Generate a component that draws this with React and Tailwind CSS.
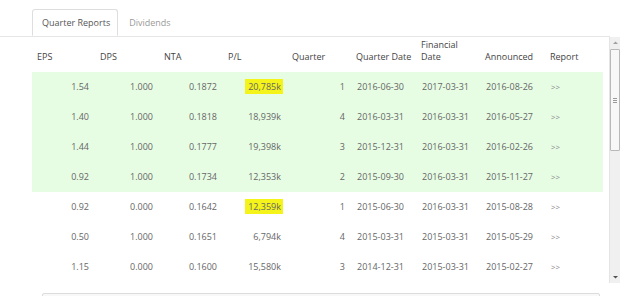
import React from 'react';

const rows = [
  { eps: '1.54', dps: '1.000', nta: '0.1872', pl: '20,785k', q: '1', qd: '2016-06-30', fd: '2017-03-31', ann: '2016-08-26', green: true, mark: true },
  { eps: '1.40', dps: '1.000', nta: '0.1818', pl: '18,939k', q: '4', qd: '2016-03-31', fd: '2016-03-31', ann: '2016-05-27', green: true },
  { eps: '1.44', dps: '1.000', nta: '0.1777', pl: '19,398k', q: '3', qd: '2015-12-31', fd: '2016-03-31', ann: '2016-02-26', green: true },
  { eps: '0.92', dps: '1.000', nta: '0.1734', pl: '12,353k', q: '2', qd: '2015-09-30', fd: '2016-03-31', ann: '2015-11-27', green: true },
  { eps: '0.92', dps: '0.000', nta: '0.1642', pl: '12,359k', q: '1', qd: '2015-06-30', fd: '2016-03-31', ann: '2015-08-28', mark: true },
  { eps: '0.50', dps: '1.000', nta: '0.1651', pl: '6,794k', q: '4', qd: '2015-03-31', fd: '2015-03-31', ann: '2015-05-29' },
  { eps: '1.15', dps: '0.000', nta: '0.1600', pl: '15,580k', q: '3', qd: '2014-12-31', fd: '2015-03-31', ann: '2015-02-27' },
];

const cols = 'grid grid-cols-[63px_64px_64px_64px_64px_65px_64px_65px_58px]';

const Num = ({ children }) => (
  <div className="text-right pr-[6px]">{children}</div>
);

const Txt = ({ children }) => (
  <div className="pl-[6px]">{children}</div>
);

const App = () => {
  return (
    <div className="w-[640px] h-[296px] bg-white overflow-hidden text-[9px] leading-[12px] font-['Open_Sans',sans-serif]">
      {/* tabs */}
      <div className="flex pl-[32px] pt-[9px] w-[610px] border-b border-[#e6e6e6]">
        <div className="h-[27px] pl-[9px] pr-[7px] flex items-center border border-[#dedede] border-b-white bg-white rounded-t-[3px] -mb-px text-[#555]">
          Quarter Reports
        </div>
        <div className="h-[27px] px-[11px] flex items-center text-[#9a9a9a]">Dividends</div>
      </div>

      <div className="flex ml-[32px]">
        <div className="w-[571px]">
          {/* header */}
          <div className={`${cols} h-[35px] items-end pb-[9px] text-[#444]`}>
            <div className="pl-[5px]">EPS</div>
            <div className="pl-[5px]">DPS</div>
            <div className="pl-[5px]">NTA</div>
            <div className="pl-[5px]">P/L</div>
            <div className="pl-[5px]">Quarter</div>
            <div className="pl-[5px]">Quarter Date</div>
            <div className="pl-[5px]">Financial<br />Date</div>
            <div className="pl-[5px]">Announced</div>
            <div className="pl-[5px]">Report</div>
          </div>

          {rows.map((r, i) => (
            <div
              key={i}
              className={`${cols} h-[30px] items-center text-[#666] ${r.green ? 'bg-[#e6fde4]' : 'bg-white'}`}
            >
              <Num>{r.eps}</Num>
              <Num>{r.dps}</Num>
              <Num>{r.nta}</Num>
              <Num>
                {r.mark ? (
                  <span className="bg-[#f4f41a] pl-[3px] pr-[2px] -mr-[2px] py-[1px]">{r.pl}</span>
                ) : (
                  r.pl
                )}
              </Num>
              <Num>{r.q}</Num>
              <Txt>{r.qd}</Txt>
              <Txt>{r.fd}</Txt>
              <Txt>{r.ann}</Txt>
              <Txt><span className="text-[8px] text-[#888]">&gt;&gt;</span></Txt>
            </div>
          ))}
        </div>

        {/* scrollbar */}
        <div className="ml-[6px] w-[11px] h-[246px] bg-[#f0f0f0] border-l border-[#e4e4e4] flex flex-col items-center">
          <svg width="7" height="10" viewBox="0 0 7 10" className="mt-[1px]">
            <path d="M1 6 L3.5 3.5 L6 6 Z" fill="#a0a0a0" />
          </svg>
          <div className="w-[10px] h-[102px] mt-[1px] bg-[#f8f8f8] border border-[#b9b9b9] rounded-[1px] flex items-center justify-center">
            <div className="flex flex-col gap-[1px]">
              <div className="w-[4px] h-px bg-[#9a9a9a]" />
              <div className="w-[4px] h-px bg-[#9a9a9a]" />
              <div className="w-[4px] h-px bg-[#9a9a9a]" />
            </div>
          </div>
          <div className="flex-1" />
          <svg width="7" height="10" viewBox="0 0 7 10" className="mb-[1px]">
            <path d="M1 4 L3.5 6.5 L6 4 Z" fill="#505050" />
          </svg>
        </div>
      </div>

      {/* next panel edge */}
      <div className="ml-[42px] mt-[10px] w-[558px] h-[20px] bg-[#f8f8f8] border border-[#dcdcdc] rounded-[2px]" />
    </div>
  );
};

export default App;
